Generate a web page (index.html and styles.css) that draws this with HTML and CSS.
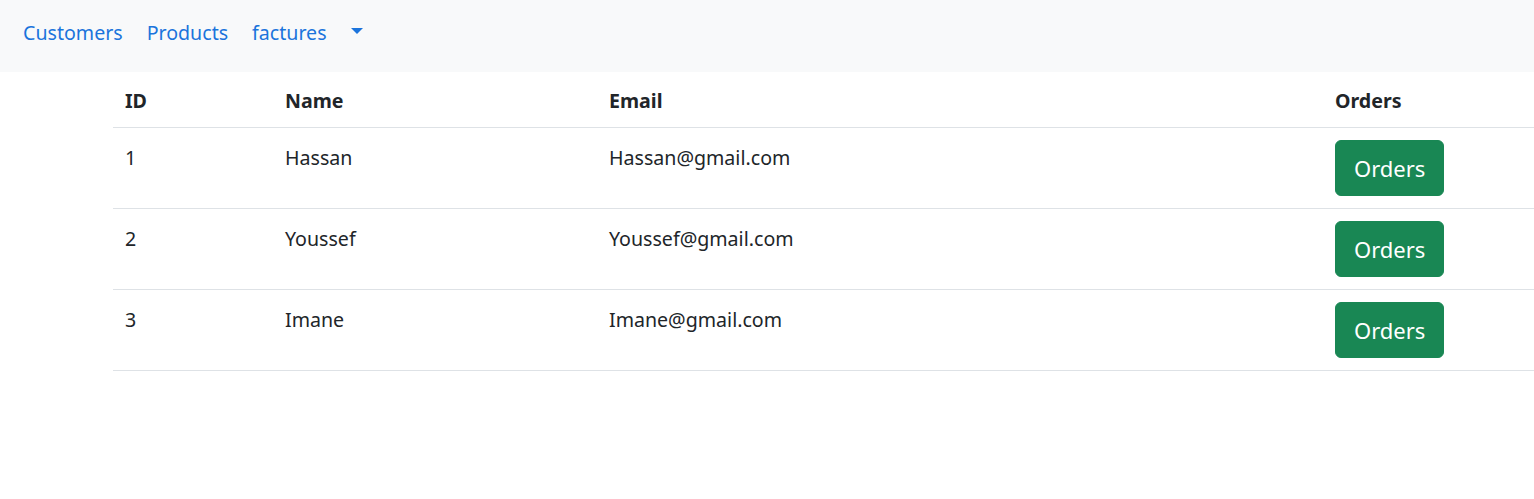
FILE: index.html
```html
<!DOCTYPE html>
<html lang="en">
<head>
<meta charset="utf-8">
<title>Customers</title>
<link rel="stylesheet" href="styles.css">
</head>
<body>
<nav class="navbar">
  <ul class="nav">
    <li><a class="nav-link" href="#">Customers</a></li>
    <li><a class="nav-link" href="#">Products</a></li>
    <li><a class="nav-link" href="#">factures</a></li>
    <li><a class="nav-link dropdown-toggle" href="#" aria-label="more"></a></li>
  </ul>
</nav>
<main class="content">
  <table class="table">
    <colgroup>
      <col class="c-id"><col class="c-name"><col class="c-email"><col class="c-orders">
    </colgroup>
    <thead>
      <tr><th>ID</th><th>Name</th><th>Email</th><th>Orders</th></tr>
    </thead>
    <tbody>
      <tr><td>1</td><td>Hassan</td><td>Hassan@gmail.com</td><td class="cell-btn"><button class="btn">Orders</button></td></tr>
      <tr><td>2</td><td>Youssef</td><td>Youssef@gmail.com</td><td class="cell-btn"><button class="btn">Orders</button></td></tr>
      <tr><td>3</td><td>Imane</td><td>Imane@gmail.com</td><td class="cell-btn"><button class="btn">Orders</button></td></tr>
    </tbody>
  </table>
</main>
</body>
</html>
```
FILE: styles.css
```css
html, body {
  margin: 0;
  padding: 0;
}
body {
  font-family: "Noto Sans", "Open Sans", sans-serif;
  font-size: 19.6px;
  line-height: 30px;
  color: #212529;
  background: #fff;
}
.navbar {
  background: #f8f9fa;
  height: 72px;
  display: flex;
  align-items: center;
  padding: 0 11px;
  box-sizing: border-box;
}
.nav {
  list-style: none;
  margin: 0;
  padding: 0;
  display: flex;
  align-items: center;
}
.nav-link {
  display: block;
  padding: 2px 12px 8px;
  font-size: 19.6px;
  color: #1b74dc;
  text-decoration: none;
}
.dropdown-toggle {
  height: 30px;
  display: flex;
  align-items: center;
}
.dropdown-toggle::after {
  content: "";
  display: block;
  border-top: 6px solid #1b74dc;
  border-left: 6px solid transparent;
  border-right: 6px solid transparent;
  margin-top: -4px;
}
.content {
  padding-left: 113px;
}
.table {
  width: 100%;
  border-collapse: collapse;
  table-layout: fixed;
}
.c-id { width: 160px; }
.c-name { width: 324px; }
.c-email { width: 726px; }
.table th, .table td {
  text-align: left;
  vertical-align: top;
  padding: 14px 12px 11px;
  border-bottom: 1px solid #dee2e6;
}
.table th {
  font-weight: 700;
}
.table td {
  padding-top: 15px;
  padding-bottom: 9px;
}
.table td.cell-btn {
  padding-top: 12px;
  padding-bottom: 12px;
}
.btn {
  display: block;
  height: 56px;
  padding: 0 18px;
  font-family: inherit;
  font-size: 22px;
  line-height: 54px;
  color: #fff;
  background: #198754;
  border: 1px solid #198754;
  border-radius: 6px;
  cursor: pointer;
}
```
